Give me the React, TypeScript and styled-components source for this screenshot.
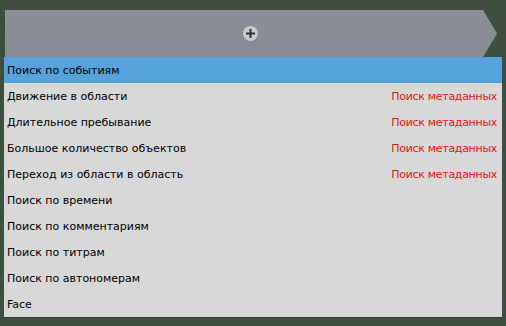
import React from "react";
import styled, { createGlobalStyle } from "styled-components";

const Global = createGlobalStyle`
  html, body { margin: 0; padding: 0; background: #3d503f; }
  body { width: 506px; height: 326px; overflow: hidden; }
`;

const Page = styled.div`
  display: flex;
  flex-direction: column;
  padding: 10px 4px 0 4px;
  font-family: "DejaVu Sans", Verdana, sans-serif;
  font-size: 11px;
`;

const Bar = styled.div`
  margin-left: 1px;
  width: 492px;
  height: 47px;
  background: linear-gradient(#8d8f97, #898b93);
  clip-path: polygon(0 0, calc(100% - 14px) 0, 100% 50%, calc(100% - 14px) 100%, 0 100%);
  display: flex;
  align-items: center;
  justify-content: center;
  box-sizing: border-box;
`;

const AddButton = styled.div`
  width: 15px;
  height: 15px;
  border-radius: 50%;
  background: #c9cad0;
  display: flex;
  align-items: center;
  justify-content: center;
  margin-left: -1px;
  margin-top: -1px;
`;

const List = styled.div`
  width: 498px;
  background: #d8d8d8;
  display: flex;
  flex-direction: column;
  box-shadow: 0 1px 0 #2f3d31;
`;

const Row = styled.div<{ $active?: boolean }>`
  height: 26px;
  display: flex;
  align-items: center;
  justify-content: space-between;
  padding: 0 5px 0 3px;
  background: ${(p) => (p.$active ? "#58a2db" : "transparent")};
  color: #000;
`;

const Tag = styled.span`
  color: #e01414;
  letter-spacing: -0.3px;
`;

const items: { label: string; tag?: boolean }[] = [
  { label: "Поиск по событиям" },
  { label: "Движение в области", tag: true },
  { label: "Длительное пребывание", tag: true },
  { label: "Большое количество объектов", tag: true },
  { label: "Переход из области в область", tag: true },
  { label: "Поиск по времени" },
  { label: "Поиск по комментариям" },
  { label: "Поиск по титрам" },
  { label: "Поиск по автономерам" },
  { label: "Face" },
];

export default function App() {
  return (
    <>
      <Global />
      <Page>
        <Bar>
          <AddButton>
            <svg width="11" height="11" viewBox="0 0 11 11">
              <rect x="4.5" y="1" width="2" height="9" fill="#2f3033" />
              <rect x="1" y="4.5" width="9" height="2" fill="#2f3033" />
            </svg>
          </AddButton>
        </Bar>
        <List>
          {items.map((it, i) => (
            <Row key={i} $active={i === 0}>
              <span>{it.label}</span>
              {it.tag && <Tag>Поиск метаданных</Tag>}
            </Row>
          ))}
        </List>
      </Page>
    </>
  );
}
